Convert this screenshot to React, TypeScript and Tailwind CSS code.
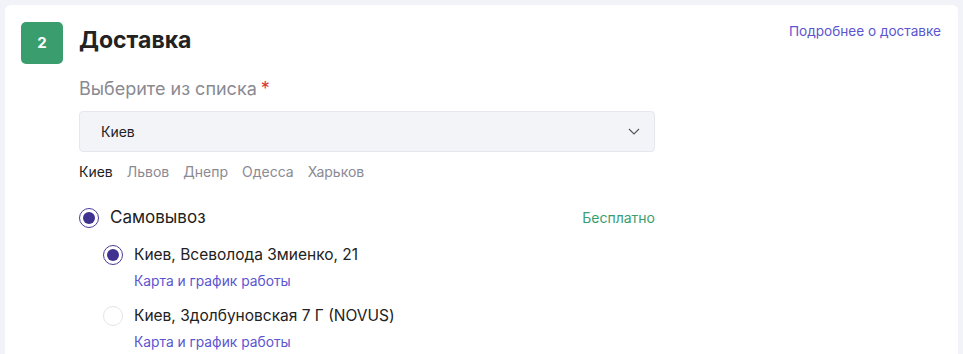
import React, { useState } from 'react';

const cities = ['Киев', 'Львов', 'Днепр', 'Одесса', 'Харьков'];

const Radio: React.FC<{ checked: boolean }> = ({ checked }) => (
  <span
    className={`flex h-5 w-5 shrink-0 items-center justify-center rounded-full border ${
      checked ? 'border-[#4a3b9a] bg-white' : 'border-[#e3e4ea] bg-white'
    }`}
  >
    {checked && <span className="h-3 w-3 rounded-full bg-[#3f318f]" />}
  </span>
);

const App: React.FC = () => {
  const [city, setCity] = useState('Киев');
  const [point, setPoint] = useState(0);

  return (
    <div className="min-h-screen bg-[#f2f3f8] p-[5px] font-['Inter',sans-serif]">
      <div className="flex h-[360px] rounded-md bg-white pl-4 pr-[17px] pt-[17px]">
        {/* Step badge */}
        <div className="flex h-[42px] w-[42px] shrink-0 items-center justify-center rounded-[5px] bg-[#3a9d6d] text-[15px] font-bold text-white">
          2
        </div>

        <div className="ml-4 w-[576px]">
          <h2 className="text-[23px] font-bold leading-[36px] text-[#222]">Доставка</h2>

          <div className="mt-[21px] text-[18px] leading-5 text-[#8a8a93]">
            Выберите из списка<span className="ml-1 text-[#d93535]">*</span>
          </div>

          {/* Select */}
          <div className="mt-[12px] flex h-[41px] items-center justify-between rounded-[4px] border border-[#e6e7ee] bg-[#f3f4f8] pl-[21px] pr-[14px]">
            <span className="text-[14px] text-[#222]">{city}</span>
            <svg width="12" height="7" viewBox="0 0 12 7" fill="none" className="text-[#555]">
              <path d="M1 1l5 5 5-5" stroke="currentColor" strokeWidth="1.1" />
            </svg>
          </div>

          {/* Quick city picks */}
          <div className="mt-[10px] flex gap-[14px] text-[14px] leading-5">
            {cities.map((c) => (
              <button
                key={c}
                onClick={() => setCity(c)}
                className={c === city ? 'text-[#222]' : 'text-[#8a8a93]'}
              >
                {c}
              </button>
            ))}
          </div>

          {/* Delivery methods */}
          <div className="mt-[23px] flex items-center justify-between">
            <div className="flex items-center gap-[11px]">
              <Radio checked />
              <span className="text-[17px] text-[#222]">Самовывоз</span>
            </div>
            <span className="text-[14px] text-[#3a9d6d]">Бесплатно</span>
          </div>

          <div className="ml-6 mt-[14px] space-y-[15px]">
            {['Киев, Всеволода Змиенко, 21', 'Киев, Здолбуновская 7 Г (NOVUS)'].map((addr, i) => (
              <div key={addr} onClick={() => setPoint(i)} className="cursor-pointer">
                <div className="flex items-center gap-[11px]">
                  <Radio checked={point === i} />
                  <span className="text-[15.5px] leading-5 text-[#222]">{addr}</span>
                </div>
                <a className="ml-[31px] mt-[6px] block text-[13.8px] leading-5 text-[#5b55d0]">Карта и график работы</a>
              </div>
            ))}
          </div>
        </div>

        <div className="ml-auto -mt-px">
          <a className="block text-[13.6px] leading-5 text-[#5b55d0]">Подробнее о доставке</a>
        </div>
      </div>
    </div>
  );
};

export default App;
